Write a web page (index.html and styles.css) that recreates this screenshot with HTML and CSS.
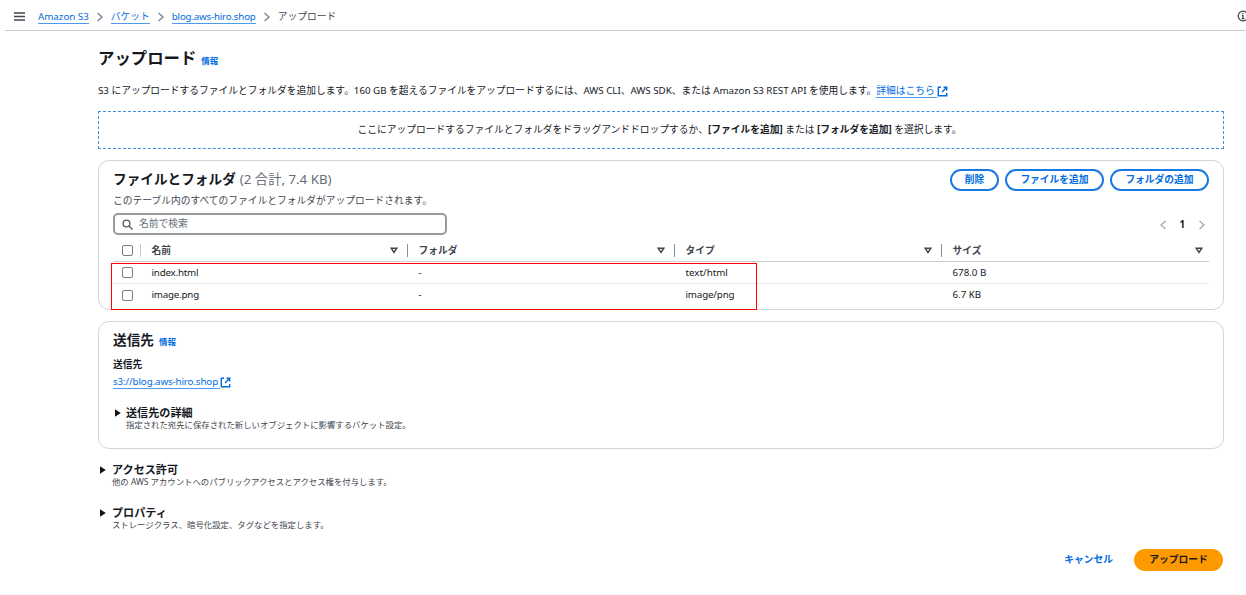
FILE: index.html
```html
<!DOCTYPE html>
<html lang="ja">
<head>
<meta charset="utf-8">
<title>アップロード</title>
<link rel="stylesheet" href="styles.css">
</head>
<body>
<svg class="defs" aria-hidden="true">
  <symbol id="ext" viewBox="0 0 11 11"><path d="M4 1.3H1.3v8.4h8.4V7M6.5 1.3h3.2v3.2M9.5 1.5 5 6"/></symbol>
  <symbol id="chev" viewBox="0 0 8 10"><path d="M1.5 1 6 5 1.5 9"/></symbol>
  <symbol id="sort" viewBox="0 0 8 7"><path d="M1.2 1.2h5.6L4 5.4z"/></symbol>
  <symbol id="tri" viewBox="0 0 6 8"><path d="M0 0.3 5.8 4 0 7.7z"/></symbol>
</svg>
<header class="topbar">
  <svg class="menu" viewBox="0 0 11 9"><path d="M0 1h11M0 4.5h11M0 8h11"/></svg>
  <nav class="crumbs">
    <a class="link">Amazon S3</a><svg class="chev"><use href="#chev"/></svg>
    <a class="link">バケット</a><svg class="chev"><use href="#chev"/></svg>
    <a class="link bucket">blog.aws-hiro.shop</a><svg class="chev"><use href="#chev"/></svg>
    <span class="here">アップロード</span>
  </nav>
  <svg class="help" viewBox="0 0 12 12"><circle cx="6" cy="6" r="4.8"/><path d="M6 5v4M4.8 5.3H6M4.7 8.7h2.6M6 2.9v1.2"/></svg>
</header>
<main class="page">
  <div class="title"><h1>アップロード</h1><a class="info">情報</a></div>
  <p class="intro"><span class="intro-text">S3 にアップロードするファイルとフォルダを追加します。160 GB を超えるファイルをアップロードするには、AWS CLI、AWS SDK、または Amazon S3 REST API を使用します。</span><a class="link more">詳細はこちら</a><svg class="ext"><use href="#ext"/></svg></p>
  <div class="drop"><span class="drop-text">ここにアップロードするファイルとフォルダをドラッグアンドドロップするか、<b>[ファイルを追加]</b> または <b>[フォルダを追加]</b> を選択します。</span></div>

  <section class="card files">
    <div class="files-head">
      <div class="files-title"><h2>ファイルとフォルダ</h2><span class="count">(2 合計, 7.4 KB)</span></div>
      <div class="actions"><button class="btn short">削除</button><button class="btn">ファイルを追加</button><button class="btn">フォルダの追加</button></div>
    </div>
    <p class="files-note">このテーブル内のすべてのファイルとフォルダがアップロードされます。</p>
    <div class="tools">
      <div class="search"><svg class="lens" viewBox="0 0 11 11"><circle cx="4.5" cy="4.5" r="3.4"/><path d="M7 7l3.5 3.5"/></svg><span>名前で検索</span></div>
      <div class="pager"><svg class="chev prev"><use href="#chev"/></svg><b>1</b><svg class="chev"><use href="#chev"/></svg></div>
    </div>
    <div class="table">
      <div class="row head"><i class="box"></i><div class="cell"><span>名前</span><svg class="sort"><use href="#sort"/></svg></div><div class="cell"><span>フォルダ</span><svg class="sort"><use href="#sort"/></svg></div><div class="cell"><span>タイプ</span><svg class="sort"><use href="#sort"/></svg></div><div class="cell last"><span>サイズ</span><svg class="sort"><use href="#sort"/></svg></div></div>
      <div class="row"><i class="box"></i><div class="cell"><span class="name">index.html</span></div><div class="cell"><span>-</span></div><div class="cell"><span>text/html</span></div><div class="cell"><span>678.0 B</span></div></div>
      <div class="row"><i class="box"></i><div class="cell"><span class="name">image.png</span></div><div class="cell"><span>-</span></div><div class="cell"><span class="mime">image/png</span></div><div class="cell"><span>6.7 KB</span></div></div>
      <div class="marker"></div>
    </div>
  </section>

  <section class="card dest">
    <div class="dest-title"><h2>送信先</h2><a class="info">情報</a></div>
    <div class="label">送信先</div>
    <div class="uri"><a class="link path">s3://blog.aws-hiro.shop</a><svg class="ext"><use href="#ext"/></svg></div>
    <div class="expander"><svg class="tri"><use href="#tri"/></svg><div><h3>送信先の詳細</h3><p>指定された宛先に保存された新しいオブジェクトに影響するバケット設定。</p></div></div>
  </section>

  <div class="expander outer"><svg class="tri"><use href="#tri"/></svg><div><h3>アクセス許可</h3><p>他の AWS アカウントへのパブリックアクセスとアクセス権を付与します。</p></div></div>
  <div class="expander outer second"><svg class="tri"><use href="#tri"/></svg><div><h3>プロパティ</h3><p>ストレージクラス、暗号化設定、タグなどを指定します。</p></div></div>

  <footer class="footer"><a class="cancel">キャンセル</a><button class="primary">アップロード</button></footer>
</main>
</body>
</html>
```
FILE: styles.css
```css
* { box-sizing: border-box; }
body {
  margin: 0;
  height: 595px;
  overflow: hidden;
  background: #fff;
  color: #16191f;
  font: 9.75px/14px "Noto Sans", "Noto Sans CJK JP", sans-serif;
}
h1, h2, h3, p { margin: 0; }
.defs { position: absolute; width: 0; height: 0; }
svg { display: block; flex: none; fill: none; stroke: currentColor; stroke-width: 1.4; }
.link { color: #006ce0; border-bottom: 1px solid #4c9aeb; line-height: 13px; white-space: nowrap; }
.info { color: #006ce0; font-size: 8.5px; font-weight: 700; }

.topbar { display: flex; align-items: center; height: 31px; margin-left: 5px; padding-left: 9px; border-bottom: 1px solid #c9cacc; overflow: hidden; }
.menu { width: 11px; height: 9px; margin-right: 13px; margin-top: 2px; color: #424650; }
.crumbs { display: flex; align-items: center; flex: 1; margin-top: 3px; color: #424650; }
.bucket { letter-spacing: -0.2px; }
.chev { width: 8px; height: 10px; margin: 0 7px; color: #7d8590; }
.help { width: 12px; height: 12px; margin-right: -3px; margin-top: 2px; color: #424650; stroke-width: 1.3; }

.page { margin-left: 98px; width: 1126px; }
.title { display: flex; align-items: baseline; gap: 5px; padding-top: 15px; height: 50px; }
h1 { font-size: 16.4px; line-height: 24px; }
.intro { display: flex; align-items: center; height: 20px; white-space: nowrap; }
.intro-text { letter-spacing: -0.013px; }
.more { padding-right: 2px; }
.ext { width: 11px; height: 11px; color: #006ce0; margin-left: 0; stroke-width: 1.4; }
.drop { display: flex; align-items: center; justify-content: center; height: 38px; margin-top: 10px; border: 1px dashed #3d8fe0; }
.drop-text { margin-right: 3px; white-space: nowrap; }

.card { border: 1px solid #d2d4d8; border-radius: 11px; padding: 0 14px; }
.files { height: 150px; margin-top: 11px; }
.files-head { display: flex; justify-content: space-between; padding-top: 8px; height: 33px; }
.files-title { display: flex; align-items: baseline; gap: 4px; margin-top: -1px; line-height: 22px; }
h2 { font-size: 13.65px; line-height: 22px; }
.count { font-size: 13.3px; color: #656d76; }
.actions { display: flex; gap: 6px; }
.btn { width: 99px; height: 22px; padding: 0; border: 2px solid #1a7ae3; border-radius: 11px; background: #fff; color: #006ce0; font: 700 9.75px/18px "Noto Sans", "Noto Sans CJK JP", sans-serif; }
.short { width: 49px; }
.files-note { color: #424650; line-height: 14px; white-space: nowrap; }
.tools { display: flex; justify-content: space-between; margin-top: 5px; height: 22px; }
.search { display: flex; align-items: center; gap: 6px; width: 334px; height: 22px; padding-left: 7px; border: 2px solid #97979e; border-radius: 5px; color: #656d76; }
.lens { width: 11px; height: 11px; color: #545b66; }
.pager { display: flex; align-items: center; padding-top: 1px; color: #16191f; }
.pager .chev { margin: 0 3px 0 13px; color: #a9adb3; }
.pager .prev { transform: scaleX(-1); margin: 0 12px 0 0; }

.table { position: relative; margin-top: 5px; }
.row { display: grid; grid-template-columns: 27px 267px 267px 267px 1fr; align-items: center; height: 22px; border-bottom: 1px solid #ebecef; }
.row:nth-child(3) { border-bottom: 0; }
.head { border-color: #c9cacf; color: #424650; font-weight: 700; }
.box { width: 11px; height: 11px; margin-left: 9px; border: 1.5px solid #7d7d86; border-radius: 2px; }
.cell { display: flex; align-items: center; justify-content: space-between; padding-left: 11.5px; height: 13px; }
.head .cell { border-left: 1px solid #8c8c94; padding-left: 10.5px; padding-right: 9px; }
.head .cell:nth-child(2) { border-color: #c6c6cd; }
.head .last { padding-right: 6px; }
.head span { padding-top: 1px; }
.sort { width: 8px; height: 7px; }
.name { letter-spacing: -0.2px; }
.mime { letter-spacing: -0.15px; }
.marker { position: absolute; left: -2px; top: 23px; width: 646px; height: 47px; border: 1px solid #f00; }

.dest { height: 128px; margin-top: 11px; }
.dest-title { display: flex; align-items: baseline; gap: 5px; padding-top: 7px; height: 36px; }
.label { font-weight: 700; }
.uri { display: flex; align-items: center; height: 14px; margin-top: 3px; }
.path { letter-spacing: -0.11px; padding-right: 2px; }
.expander { display: flex; gap: 5px; margin-top: 17px; padding-left: 2px; }
.tri { width: 6px; height: 8px; margin-top: 3px; fill: #0f141a; stroke: none; }
h3 { font-size: 11.1px; line-height: 14px; }
.expander p { margin-top: -1px; color: #424650; font-size: 8.4px; line-height: 11px; white-space: nowrap; }
.outer { height: 25px; margin-top: 14px; gap: 6px; }
.second { margin-top: 18px; }
.footer { display: flex; justify-content: flex-end; align-items: center; gap: 21px; margin-top: 18px; padding-right: 1px; }
.cancel { color: #006ce0; font-weight: 700; }
.primary { width: 89px; height: 22px; padding: 0; border: 0; border-radius: 11px; background: #ff9900; color: #16191f; font: 700 9.75px/22px "Noto Sans", "Noto Sans CJK JP", sans-serif; }
```
